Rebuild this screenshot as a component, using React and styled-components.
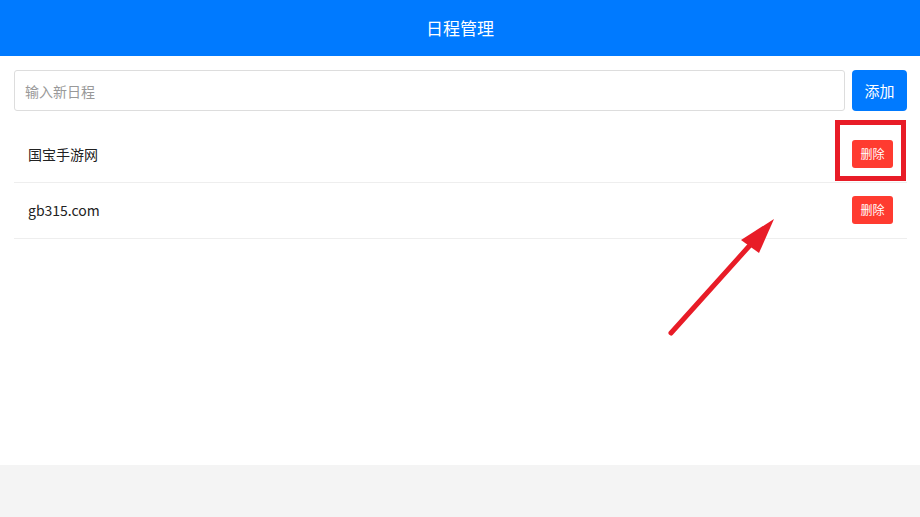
import React, { useState } from "react";
import styled, { createGlobalStyle } from "styled-components";

const Global = createGlobalStyle`
  html, body { margin: 0; padding: 0; background: #f4f4f4; }
  body { font-family: "Noto Sans CJK SC", "Noto Sans", sans-serif; }
  * { box-sizing: border-box; }
`;

const Page = styled.div`
  position: relative;
  width: 920px;
  height: 517px;
  background: #f4f4f4;
`;

const Main = styled.div`
  height: 465px;
  background: #fff;
  display: flex;
  flex-direction: column;
`;

const Header = styled.header`
  height: 56px;
  background: #007aff;
  color: #fff;
  display: flex;
  align-items: center;
  justify-content: center;
  font-size: 17px;
  padding-bottom: 2px;
`;

const Content = styled.div`
  padding: 14px 13px 0 14px;
  display: flex;
  flex-direction: column;
  gap: 16px;
`;

const AddBar = styled.div`
  display: flex;
  gap: 7px;
  align-items: center;
`;

const Input = styled.input`
  flex: 1;
  height: 41px;
  border: 1px solid #ddd;
  border-radius: 3px;
  padding: 0 10px;
  font-family: inherit;
  font-size: 14px;
  color: #333;
  outline: none;
  &::placeholder { color: #999; }
`;

const AddButton = styled.button`
  width: 55px;
  height: 41px;
  border: none;
  border-radius: 4px;
  background: #007aff;
  color: #fff;
  font-family: inherit;
  font-size: 15px;
  padding: 0;
`;

const List = styled.ul`
  list-style: none;
  margin: 0;
  padding: 0;
`;

const Item = styled.li`
  height: 56px;
  display: flex;
  align-items: center;
  justify-content: space-between;
  padding: 0 14px 2px;
  border-bottom: 1px solid #eee;
  font-size: 14px;
  color: #222;
`;

const DeleteButton = styled.button`
  width: 41px;
  height: 28px;
  border: none;
  border-radius: 3px;
  background: #ff3b30;
  color: #fff;
  font-family: inherit;
  font-size: 12px;
  padding: 0;
`;

const Annotation = styled.svg`
  position: absolute;
  left: 0;
  top: 0;
  pointer-events: none;
`;

export default function App() {
  const [items, setItems] = useState(["国宝手游网", "gb315.com"]);
  const [text, setText] = useState("");
  return (
    <Page>
      <Global />
      <Main>
        <Header>日程管理</Header>
        <Content>
          <AddBar>
            <Input
              placeholder="输入新日程"
              value={text}
              onChange={(e) => setText(e.target.value)}
            />
            <AddButton
              onClick={() => {
                if (text.trim()) {
                  setItems([...items, text.trim()]);
                  setText("");
                }
              }}
            >
              添加
            </AddButton>
          </AddBar>
          <List>
            {items.map((it, i) => (
              <Item key={i}>
                <span>{it}</span>
                <DeleteButton onClick={() => setItems(items.filter((_, j) => j !== i))}>
                  删除
                </DeleteButton>
              </Item>
            ))}
          </List>
        </Content>
      </Main>
      <Annotation width="920" height="517" viewBox="0 0 920 517">
        <rect x="837.5" y="122.5" width="66" height="56" fill="none" stroke="#e81c27" strokeWidth="5" />
        <line x1="671" y1="333" x2="752" y2="243" stroke="#e81c27" strokeWidth="5" strokeLinecap="round" />
        <polygon points="774,219 741,240 759,253" fill="#e81c27" />
      </Annotation>
    </Page>
  );
}
